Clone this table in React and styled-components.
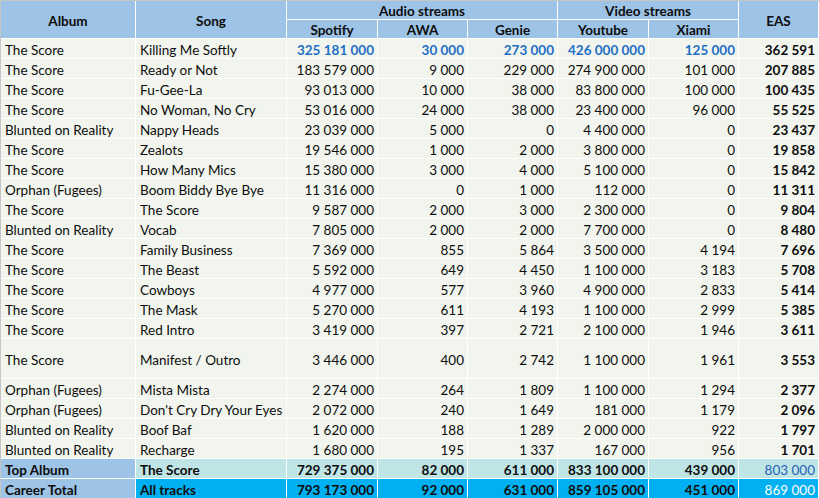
import styled, { createGlobalStyle } from "styled-components";

const GlobalStyle = createGlobalStyle`
  html, body {
    margin: 0;
    padding: 0;
    background: #ffffff;
  }
  body {
    font-family: "Lato", "Liberation Sans", sans-serif;
  }
`;

const HEADER_BG = "#9dc3e6";
const CELL_BG = "#f1f5ee";
const TOP_BG = "#c0e5e6";
const TOTAL_BG = "#00b0f0";

const Table = styled.table`
  border-collapse: separate;
  border-spacing: 0;
  table-layout: fixed;
  width: 819px;
  border-top: 1px solid #c6c6c6;
  border-left: 1px solid #c6c6c6;
  font-size: 13.5px;
  color: #0d0d0d;
`;

const HeadCell = styled.th`
  background: ${HEADER_BG};
  border-right: 1px solid #ffffff;
  border-bottom: 1px solid #ffffff;
  height: ${(p) => p.$h || 19}px;
  box-sizing: border-box;
  padding: 2px 0 0 0;
  font-weight: 700;
  text-align: center;
  vertical-align: middle;
  line-height: 16px;
`;

const Cell = styled.td`
  background: ${(p) => p.$bg || CELL_BG};
  border-right: 1px solid #ffffff;
  border-bottom: 1px solid #ffffff;
  height: ${(p) => p.$h || 20}px;
  padding: 3px 3px 0 4px;
  box-sizing: border-box;
  text-align: ${(p) => (p.$num ? "right" : "left")};
  font-weight: ${(p) => (p.$bold ? 700 : 400)};
  color: ${(p) => p.$color || "#0d0d0d"};
  white-space: nowrap;
  overflow: hidden;
  vertical-align: middle;
  line-height: 16px;
`;

const widths = [135, 151, 91, 90, 90, 91, 90, 80];

const rows = [
  ["The Score", "Killing Me Softly", "325 181 000", "30 000", "273 000", "426 000 000", "125 000", "362 591"],
  ["The Score", "Ready or Not", "183 579 000", "9 000", "229 000", "274 900 000", "101 000", "207 885"],
  ["The Score", "Fu-Gee-La", "93 013 000", "10 000", "38 000", "83 800 000", "100 000", "100 435"],
  ["The Score", "No Woman, No Cry", "53 016 000", "24 000", "38 000", "23 400 000", "96 000", "55 525"],
  ["Blunted on Reality", "Nappy Heads", "23 039 000", "5 000", "0", "4 400 000", "0", "23 437"],
  ["The Score", "Zealots", "19 546 000", "1 000", "2 000", "3 800 000", "0", "19 858"],
  ["The Score", "How Many Mics", "15 380 000", "3 000", "4 000", "5 100 000", "0", "15 842"],
  ["Orphan (Fugees)", "Boom Biddy Bye Bye", "11 316 000", "0", "1 000", "112 000", "0", "11 311"],
  ["The Score", "The Score", "9 587 000", "2 000", "3 000", "2 300 000", "0", "9 804"],
  ["Blunted on Reality", "Vocab", "7 805 000", "2 000", "2 000", "7 700 000", "0", "8 480"],
  ["The Score", "Family Business", "7 369 000", "855", "5 864", "3 500 000", "4 194", "7 696"],
  ["The Score", "The Beast", "5 592 000", "649", "4 450", "1 100 000", "3 183", "5 708"],
  ["The Score", "Cowboys", "4 977 000", "577", "3 960", "4 900 000", "2 833", "5 414"],
  ["The Score", "The Mask", "5 270 000", "611", "4 193", "1 100 000", "2 999", "5 385"],
  ["The Score", "Red Intro", "3 419 000", "397", "2 721", "2 100 000", "1 946", "3 611"],
  ["The Score", "Manifest / Outro", "3 446 000", "400", "2 742", "1 100 000", "1 961", "3 553"],
  ["Orphan (Fugees)", "Mista Mista", "2 274 000", "264", "1 809", "1 100 000", "1 294", "2 377"],
  ["Orphan (Fugees)", "Don't Cry Dry Your Eyes", "2 072 000", "240", "1 649", "181 000", "1 179", "2 096"],
  ["Blunted on Reality", "Boof Baf", "1 620 000", "188", "1 289", "2 000 000", "922", "1 797"],
  ["Blunted on Reality", "Recharge", "1 680 000", "195", "1 337", "167 000", "956", "1 701"],
];

const topAlbum = ["Top Album", "The Score", "729 375 000", "82 000", "611 000", "833 100 000", "439 000", "803 000"];
const careerTotal = ["Career Total", "All tracks", "793 173 000", "92 000", "631 000", "859 105 000", "451 000", "869 000"];

function DataRow({ row, index }) {
  const first = index === 0;
  const tall = row[1] === "Manifest / Outro";
  const h = tall ? 40 : 20;
  return (
    <tr>
      <Cell $h={h}>{row[0]}</Cell>
      <Cell $h={h}>{row[1]}</Cell>
      {row.slice(2, 7).map((v, i) => (
        <Cell key={i} $h={h} $num $bold={first} $color={first ? "#1f6fc6" : undefined}>
          {v}
        </Cell>
      ))}
      <Cell $h={h} $num $bold>
        {row[7]}
      </Cell>
    </tr>
  );
}

function SummaryRow({ row, bg, easColor }) {
  return (
    <tr>
      <Cell $bg={HEADER_BG} $bold>
        {row[0]}
      </Cell>
      <Cell $bg={bg} $bold>
        {row[1]}
      </Cell>
      {row.slice(2, 7).map((v, i) => (
        <Cell key={i} $bg={bg} $num $bold>
          {v}
        </Cell>
      ))}
      <Cell $bg={bg} $num $color={easColor}>
        {row[7]}
      </Cell>
    </tr>
  );
}

export default function App() {
  return (
    <>
      <GlobalStyle />
      <Table>
        <colgroup>
          {widths.map((w, i) => (
            <col key={i} style={{ width: w }} />
          ))}
        </colgroup>
        <thead>
          <tr>
            <HeadCell rowSpan={2}>Album</HeadCell>
            <HeadCell rowSpan={2}>Song</HeadCell>
            <HeadCell colSpan={3} $h={19}>Audio streams</HeadCell>
            <HeadCell colSpan={2} $h={19}>Video streams</HeadCell>
            <HeadCell rowSpan={2}>EAS</HeadCell>
          </tr>
          <tr>
            <HeadCell $h={18}>Spotify</HeadCell>
            <HeadCell $h={18}>AWA</HeadCell>
            <HeadCell $h={18}>Genie</HeadCell>
            <HeadCell $h={18}>Youtube</HeadCell>
            <HeadCell $h={18}>Xiami</HeadCell>
          </tr>
        </thead>
        <tbody>
          {rows.map((r, i) => (
            <DataRow key={i} row={r} index={i} />
          ))}
          <SummaryRow row={topAlbum} bg={TOP_BG} easColor="#1f62b8" />
          <SummaryRow row={careerTotal} bg={TOTAL_BG} easColor="#ffffff" />
        </tbody>
      </Table>
    </>
  );
}
